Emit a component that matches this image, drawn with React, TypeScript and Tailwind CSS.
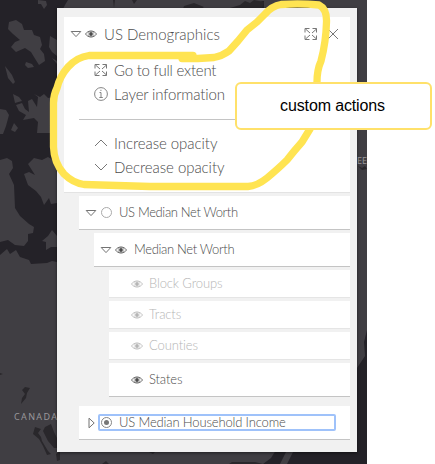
import type { ReactNode } from 'react';

function Eye({ className = '' }: { className?: string }) {
  return (
    <svg className={`h-[10px] w-3 shrink-0 ${className}`} viewBox="0 0 12 10" fill="none" stroke="currentColor">
      <path d="M.5 5C3 1 9 1 11.5 5C9 9 3 9 .5 5Z" strokeWidth=".8" />
      <circle cx="6" cy="5" r="1.9" fill="currentColor" stroke="none" />
      <circle cx="6" cy="5" r="2.9" strokeWidth=".4" />
    </svg>
  );
}

function Caret({ closed = false }: { closed?: boolean }) {
  return closed ? (
    <svg className="h-3 w-3 shrink-0" viewBox="0 0 12 12" fill="none" stroke="#737373" strokeWidth="1">
      <path d="M4 1.2L9.2 6L4 10.8Z" />
    </svg>
  ) : (
    <svg className="h-3 w-3 shrink-0" viewBox="0 0 12 12" fill="none" stroke="#737373" strokeWidth="1">
      <path d="M1.2 3.5H10.8L6 8.6Z" />
    </svg>
  );
}

function Extent() {
  return (
    <svg className="h-[14px] w-[14px] shrink-0" viewBox="0 0 14 14" fill="none" stroke="#777" strokeWidth="1">
      <path d="M1 5.5V1.5H5.5M8.5 1.5H12.5V5.5M1 8.5V12.5H5.5M8.5 12.5H12.5V8.5M1.5 2L6 6M12.5 2L8 6M1.5 12L6 8M12.5 12L8 8" />
    </svg>
  );
}

function Info() {
  return (
    <svg className="h-[14px] w-[14px] shrink-0" viewBox="0 0 14 14" fill="none" stroke="#777" strokeWidth="1">
      <circle cx="7" cy="7" r="6.4" strokeWidth=".9" />
      <path d="M5.5 5.5H7V10.5M5.3 10.5H8.8M6.3 3.3H7.5" strokeWidth=".9" />
    </svg>
  );
}

function Chevron({ down = false }: { down?: boolean }) {
  return (
    <svg className="h-[14px] w-[14px] shrink-0" viewBox="0 0 14 14" fill="none" stroke="#777" strokeWidth="1">
      <path d={down ? 'M1 4L7 10L13 4' : 'M1 10L7 4L13 10'} />
    </svg>
  );
}

function Action({ icon, children }: { icon: ReactNode; children: ReactNode }) {
  return (
    <div className="flex h-6 items-center gap-[6px] pl-[30px] text-[15px] leading-5">
      {icon}
      {children}
    </div>
  );
}

function Sublayer({ children, visible = false }: { children: ReactNode; visible?: boolean }) {
  return (
    <div
      className={`ml-[45px] flex items-center gap-[6px] border-b bg-white pl-[22px] text-[13px] leading-4 tracking-[-0.12px] ${
        visible ? 'h-[34px] border-[#c4c4c4] text-[#4c4c4c]' : 'h-7 border-[#e5e5e5] text-[#b5b5b5]'
      }`}
    >
      <Eye />
      <span className="-mt-[2px]">{children}</span>
    </div>
  );
}

function BaseMap() {
  return (
    <svg className="absolute inset-0 h-[464px] w-[367px]" viewBox="0 0 367 464">
      <path fill="#242228" d="M0 0H367V464H0Z" />
      <g fill="#403e43">
        <path d="M38 0L46 1L47 5L44 9L41 4L38 4ZM68 0H134V9H63L65 5ZM130 0H265L253 5L230 9H130ZM264 0H367V330L364 342L365 356L357 368V9H264Z" />
        <path d="M9 22L16 20L22 24L24 30L32 30L34 35L40 37L42 45L40 49L44 54L45 61L39 65L34 57L31 52L25 48L16 52L11 47L15 42L20 40L13 34L8 29ZM26 62L32 64L34 67L28 68L25 65ZM50 36L57 40V56L52 52L49 47ZM52 58L57 61V64ZM5 66L9 71L12 75L15 82L13 84L8 78Z" />
        <path d="M13 94L19 97L22 101L15 103ZM16 105L22 103L25 109L29 112L28 101L32 99L37 107L38 97L34 94L40 97L44 94L48 98L53 97L57 100V127L52 133L37 133L38 122L34 118L23 120L26 115L19 111ZM0 109L6 110L9 115L6 126L3 134L0 134ZM14 123L18 128L15 132L11 130Z" />
        <path d="M0 160L7 158L12 161L13 168L9 174L14 185L15 208L20 216L29 224L34 227L33 233L28 234L28 241L24 246L15 245L8 240L0 242ZM24 174L29 172L35 175L28 164L34 158L42 160L48 157L53 160L57 159V203L51 204L49 198L44 205L41 197L36 191L28 185ZM48 236L52 230L57 236V247L51 247L46 250L46 242L42 241Z" />
        <path d="M0 255L7 249L10 254L16 250L20 257L29 260L31 264L47 263L52 261L57 262V464H0ZM57 450H276L271 458L263 464H57ZM286 452H293L287 464H280Z" />
      </g>
      <g fill="#29272b">
        <path d="M25 387L30 388L27 393L26 398L21 404L22 398L25 394L22 390ZM35 427L41 429L38 433L41 437L42 441L48 451L51 454L47 455L43 446L39 439L33 434ZM45 427L51 424L54 432L57 438V448L54 448L48 441L43 431ZM56 454L60 451V460L57 461ZM0 373L3 374L0 375ZM149 452H155L153 454ZM229 464L232 462L255 462L263 464Z" />
        <path d="M102 464L106 461L109 464ZM132 0H137L134 4ZM113 0L115 0L114 8ZM184 6L194 3L204 7L201 9H183ZM230 8L240 5L245 1L250 3L254 0L264 2L262 8ZM358 166L362 168L365 166L367 169L362 170Z" />
      </g>
    </svg>
  );
}

function Highlight() {
  return (
    <svg
      className="pointer-events-none absolute inset-0 h-[464px] w-[435px]"
      viewBox="0 0 435 464"
      fill="none"
      stroke="#ffe452"
      strokeLinecap="round"
      strokeLinejoin="round"
    >
      <path
        strokeWidth="7.3"
        d="M193 55.5H89Q77 57 68 67Q60 76 57 88Q53.5 95 53.5 103V147Q54 163 64 174Q73 183 84 184.5L150 186.5H248Q257 186 267 178Q279 168 287 160Q294 151 302 142L310 129M317 82Q317 70 321 61Q326 42 326.5 22Q327 9 319 5Q300 3 281 4.5Q272 6 265 14L257 22L247 30L238 41L229 51Q222 56 214 57.5L198 58.5H182"
      />
    </svg>
  );
}

export default function App() {
  return (
    <main className="relative h-[464px] w-[435px] overflow-hidden bg-white pt-2 pl-[57px] font-['Lato',sans-serif] font-light">
      <BaseMap />
      <span className="absolute top-[410px] left-[14px] font-['Noto_Sans',sans-serif] text-[9px] leading-[13px] font-normal tracking-[1.35px] text-[#99979b]">
        CANADA
      </span>
      <span className="absolute top-[154px] left-[357px] font-['Noto_Sans',sans-serif] text-[9px] leading-[13px] font-normal text-[#99979b]">
        EE
      </span>

      <section className="relative h-[444px] w-[300px] bg-[#f1f1f1] px-[7px] pt-[9px] text-[#4c4c4c] shadow-[0_1px_3px_rgba(0,0,0,.5)]">
        <div className="h-[176px] border-b border-[#e3e3e3] bg-white">
          <header className="flex h-[34px] items-center pl-[6px] text-[15px]">
            <Caret />
            <Eye className="ml-[3px]" />
            <span className="ml-[7px] flex-1">US Demographics</span>
            <Extent />
            <svg className="mr-[11px] ml-[9px] h-3 w-3" viewBox="0 0 12 12" stroke="#777">
              <path d="M1 1L11 11M11 1L1 11" />
            </svg>
          </header>
          <div className="pt-[7px]">
            <Action icon={<Extent />}>
              <span className="tracking-[-0.22px]">Go to full extent</span>
            </Action>
            <Action icon={<Info />}>
              <span className="tracking-[-0.14px]">Layer information</span>
            </Action>
            <div className="mt-[13px] mb-[11px] ml-[15px] border-t border-[#c4c4c4]" />
            <Action icon={<Chevron />}>
              <span className="tracking-[-0.06px]">Increase opacity</span>
            </Action>
            <Action icon={<Chevron down />}>
              <span className="tracking-[-0.06px]">Decrease opacity</span>
            </Action>
          </div>
        </div>

        <div className="mt-[3px] flex flex-col gap-[3px]">
          <div className="ml-[15px] flex h-[34px] items-center border-b border-[#c4c4c4] bg-white pl-[6px] text-[13px]">
            <Caret />
            <span className="ml-[4px] h-[11px] w-[11px] rounded-full border border-[#aaa]" />
            <span className="ml-[7px] tracking-[-0.35px]">US Median Net Worth</span>
          </div>
          <div className="ml-[30px] flex h-[34px] items-center border-b border-[#c4c4c4] bg-white pl-[6px] text-[13px]">
            <Caret />
            <Eye className="ml-[3px]" />
            <span className="ml-[7px] tracking-[-0.33px]">Median Net Worth</span>
          </div>
          <Sublayer>Block Groups</Sublayer>
          <Sublayer>Tracts</Sublayer>
          <Sublayer>Counties</Sublayer>
          <Sublayer visible>States</Sublayer>
        </div>

        <div className="mt-[9px] ml-[15px] flex h-[34px] items-center border-b border-[#c4c4c4] bg-white pl-[6px] text-[13px]">
          <Caret closed />
          <div className="ml-[1px] flex h-[17px] w-[238px] items-center rounded-[2px] border-2 border-[#9fc2fa] leading-[13px]">
            <span className="ml-px flex h-[11px] w-[11px] items-center justify-center rounded-full border border-[#858585]">
              <span className="h-[5px] w-[5px] rounded-full bg-[#777]" />
            </span>
            <span className="ml-[7px] tracking-[-0.15px]">US Median Household Income</span>
          </div>
        </div>
      </section>

      <Highlight />
      <div className="absolute top-[82px] left-[235px] flex h-12 w-[197px] items-center justify-center rounded-[6px] border-2 border-[#ffe16a] bg-white pr-0.5 font-['Liberation_Sans',Arial,sans-serif] text-[16px] font-normal tracking-[-0.14px] text-black">
        custom actions
      </div>
    </main>
  );
}
